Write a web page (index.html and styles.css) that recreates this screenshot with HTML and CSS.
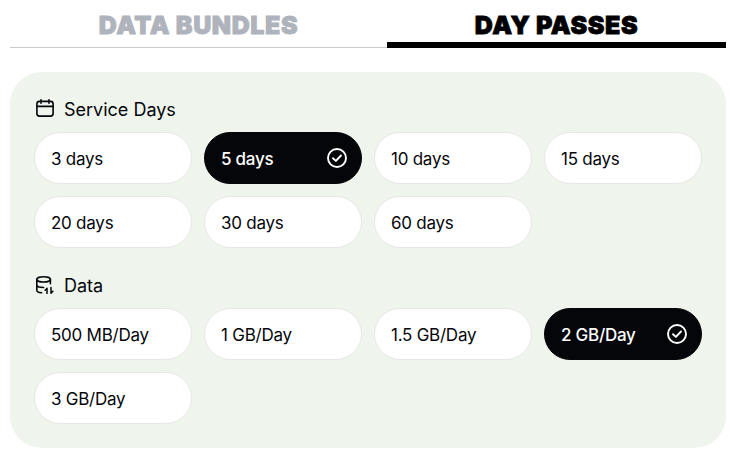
FILE: index.html
```html
<!DOCTYPE html>
<html lang="en">
<head>
<meta charset="utf-8">
<title>Day Passes</title>
<link rel="stylesheet" href="styles.css">
</head>
<body>
<div class="page">
  <div class="tabs">
    <div class="tab tab-left">DATA BUNDLES</div>
    <div class="tab tab-right">DAY PASSES</div>
  </div>
  <div class="panel">
    <div class="label">
      <svg class="icon icon-cal" viewBox="0 0 18 18" fill="none" stroke="currentColor" stroke-width="1.6" stroke-linecap="round" stroke-linejoin="round"><rect x="0.9" y="2.4" width="16.2" height="14.7" rx="2.6"/><path d="M0.9 7.4h16.2M5 0.8v3.4M13 0.8v3.4"/></svg>
      <span>Service Days</span>
    </div>
    <div class="grid">
      <div class="chip">3 days</div>
      <div class="chip active">5 days<svg class="check" viewBox="0 0 20 20" fill="none" stroke="currentColor" stroke-width="1.9" stroke-linecap="round" stroke-linejoin="round"><circle cx="10" cy="10" r="9"/><path d="M6 10.2l2.9 2.7 5.1-5.4"/></svg></div>
      <div class="chip">10 days</div>
      <div class="chip">15 days</div>
      <div class="chip">20 days</div>
      <div class="chip">30 days</div>
      <div class="chip">60 days</div>
    </div>
    <div class="label label-data">
      <svg class="icon" viewBox="0 0 18 18" fill="none" stroke="currentColor" stroke-width="1.6" stroke-linecap="round" stroke-linejoin="round"><ellipse cx="7.6" cy="3.4" rx="6.8" ry="2.6"/><path d="M0.8 3.4v10.8c0 1.4 2.2 2.4 4.8 2.6M14.4 3.4v4.4M0.8 8.8c0 1.5 3 2.7 6.8 2.7"/><path d="M11 17.4v-5M9.2 14.2l1.8-1.8M15 11.6v5.6M15 17.2l1.9-1.9" stroke-width="1.5"/></svg>
      <span>Data</span>
    </div>
    <div class="grid">
      <div class="chip">500 MB/Day</div>
      <div class="chip">1 GB/Day</div>
      <div class="chip">1.5 GB/Day</div>
      <div class="chip active">2 GB/Day<svg class="check" viewBox="0 0 20 20" fill="none" stroke="currentColor" stroke-width="1.9" stroke-linecap="round" stroke-linejoin="round"><circle cx="10" cy="10" r="9"/><path d="M6 10.2l2.9 2.7 5.1-5.4"/></svg></div>
      <div class="chip">3 GB/Day</div>
    </div>
  </div>
</div>
</body>
</html>
```
FILE: styles.css
```css
* { box-sizing: border-box; }
html, body { margin: 0; padding: 0; background: #fff; }
body { font-family: Inter, "Liberation Sans", sans-serif; color: #05060a; }
.page { width: 732px; height: 458px; padding: 0 6px 10px 10px; overflow: hidden; }
.tabs { display: flex; height: 48px; align-items: stretch; }
.tab {
  font-family: Inter, "Liberation Sans", sans-serif;
  font-weight: 900;
  font-size: 25px;
  letter-spacing: 0.6px;
  -webkit-text-stroke: 0.8px currentColor;
  line-height: 50px;
  text-align: center;
  height: 48px;
}
.tab-left { width: 377px; color: #aeb3bc; border-bottom: 1px solid #c9c9c9; }
.tab-right { width: 339px; color: #000; border-bottom: 6px solid #000; }
.panel {
  margin-top: 24px;
  width: 716px;
  height: 376px;
  background: #eff4ec;
  border-radius: 32px;
  padding: 24px;
}
.label { display: flex; align-items: center; gap: 10px; height: 26px; margin-bottom: 10px; font-size: 18px; padding-left: 2px; }
.label span { line-height: 26px; padding-top: 2px; }
.label-data { margin-top: 24px; }
.icon { width: 18px; height: 18px; flex: none; }
.icon-cal { margin-top: -2px; }
.grid { display: grid; grid-template-columns: repeat(4, 158px); gap: 12px; }
.chip {
  height: 52px;
  background: #fff;
  border: 1px solid #e6e8e4;
  border-radius: 26px;
  padding: 2px 16px 0;
  display: flex;
  align-items: center;
  justify-content: space-between;
  font-size: 17px;
  letter-spacing: -0.25px;
}
.chip.active { background: #05060a; border-color: #05060a; color: #fff; font-weight: 500; }
.check { width: 20px; height: 20px; flex: none; margin: -2px -2px 0 0; }
```
